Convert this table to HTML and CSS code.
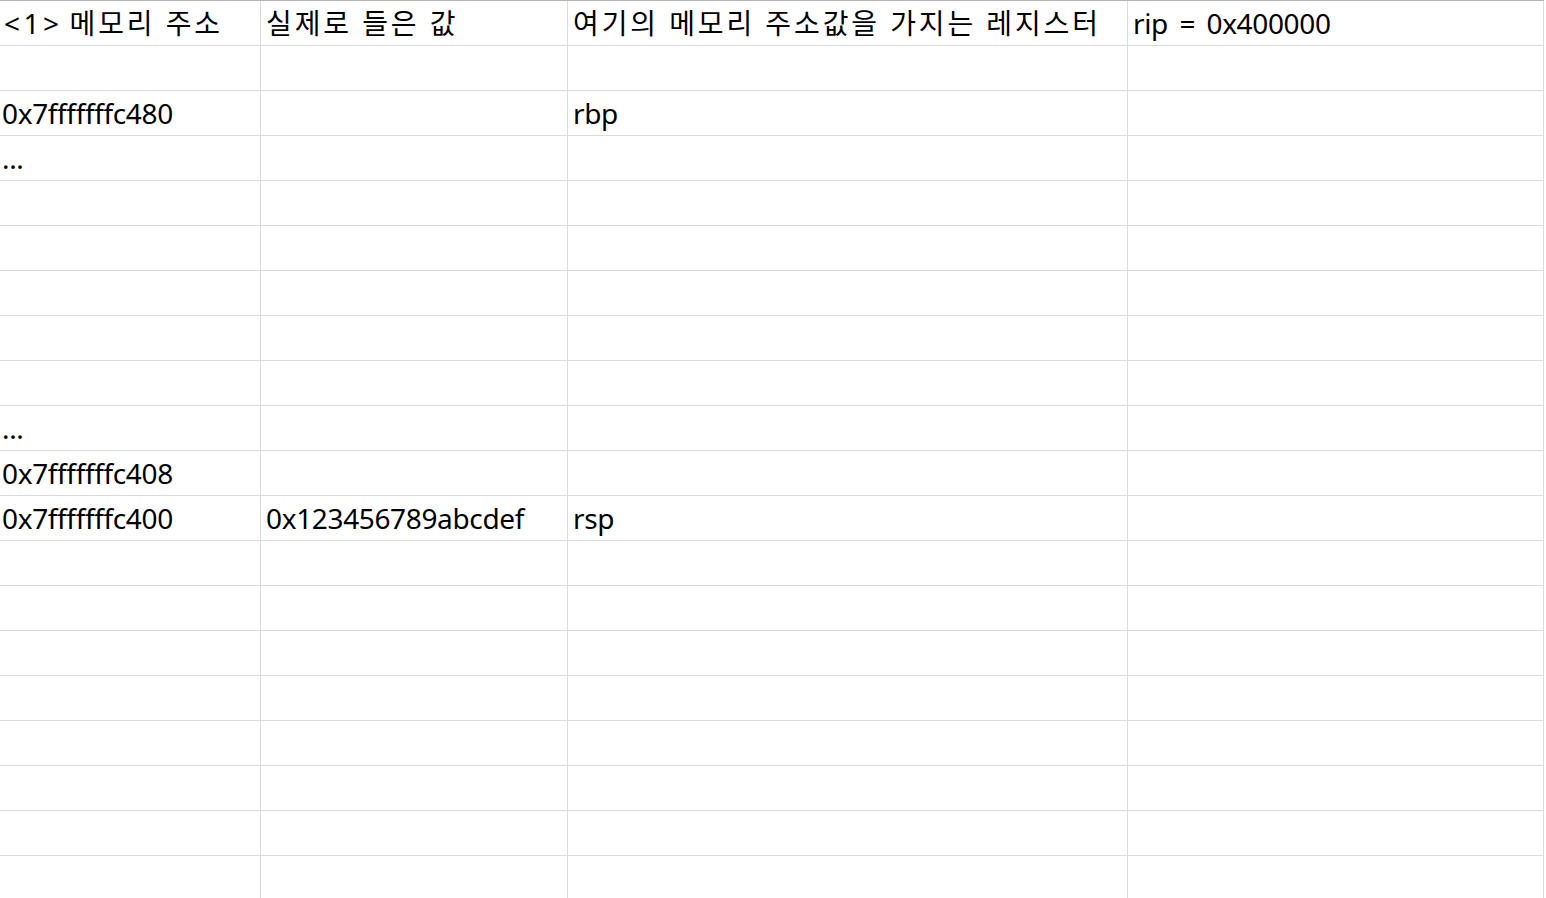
FILE: index.html
```html
<!DOCTYPE html>
<html>

<head>
  <meta charset="utf-8">
  <link rel="stylesheet" href="styles.css">
</head>

<body>
  <table class="sheet">
    <colgroup>
      <col class="col-addr">
      <col class="col-value">
      <col class="col-reg">
      <col class="col-note">
    </colgroup>
    <tr>
      <td class="first"><span class="tag">&lt;1&gt;</span> <span class="ko">메모리 주소</span></td>
      <td><span class="ko">실제로 들은 값</span></td>
      <td><span class="ko">여기의 메모리 주소값을 가지는 레지스터</span></td>
      <td class="wide-space">rip = 0x400000</td>
    </tr>
    <tr><td class="first"></td><td></td><td></td><td></td></tr>
    <tr>
      <td class="first">0x7fffffffc480</td>
      <td></td>
      <td>rbp</td>
      <td></td>
    </tr>
    <tr><td class="first">...</td><td></td><td></td><td></td></tr>
    <tr><td class="first"></td><td></td><td></td><td></td></tr>
    <tr><td class="first"></td><td></td><td></td><td></td></tr>
    <tr><td class="first"></td><td></td><td></td><td></td></tr>
    <tr><td class="first"></td><td></td><td></td><td></td></tr>
    <tr><td class="first"></td><td></td><td></td><td></td></tr>
    <tr><td class="first">...</td><td></td><td></td><td></td></tr>
    <tr><td class="first">0x7fffffffc408</td><td></td><td></td><td></td></tr>
    <tr>
      <td class="first">0x7fffffffc400</td>
      <td>0x123456789abcdef</td>
      <td>rsp</td>
      <td></td>
    </tr>
    <tr><td class="first"></td><td></td><td></td><td></td></tr>
    <tr><td class="first"></td><td></td><td></td><td></td></tr>
    <tr><td class="first"></td><td></td><td></td><td></td></tr>
    <tr><td class="first"></td><td></td><td></td><td></td></tr>
    <tr><td class="first"></td><td></td><td></td><td></td></tr>
    <tr><td class="first"></td><td></td><td></td><td></td></tr>
    <tr><td class="first"></td><td></td><td></td><td></td></tr>
    <tr><td class="first"></td><td></td><td></td><td></td></tr>
  </table>
</body>

</html>
```

FILE: styles.css
```css
html,
body {
  margin: 0;
  height: 100%;
  overflow: hidden;
  background-color: white;
}

.sheet {
  table-layout: fixed;
  width: 1544px;
  border-collapse: separate;
  border-spacing: 0;
  border-top: 1px solid #b4b4b4;
  font-family: "Noto Sans", "Noto Sans CJK KR", sans-serif;
  font-size: 28px;
  color: #000;
}

.col-addr {
  width: 261px;
}

.col-value {
  width: 307px;
}

.col-reg {
  width: 560px;
}

.col-note {
  width: 416px;
}

.sheet td {
  box-sizing: border-box;
  height: 45px;
  padding: 0 0 0 5px;
  border-right: 1px solid #dadada;
  border-bottom: 1px solid #dadada;
  line-height: 44px;
  letter-spacing: -0.35px;
  vertical-align: top;
  white-space: nowrap;
  overflow: hidden;
}

.sheet td.first {
  padding-left: 2px;
}

/* hangul runs wider than the latin face */
.ko {
  letter-spacing: 2.9px;
}

.tag {
  margin-left: 2px;
  letter-spacing: 3.5px;
}

.wide-space {
  word-spacing: 4.5px;
}
```
